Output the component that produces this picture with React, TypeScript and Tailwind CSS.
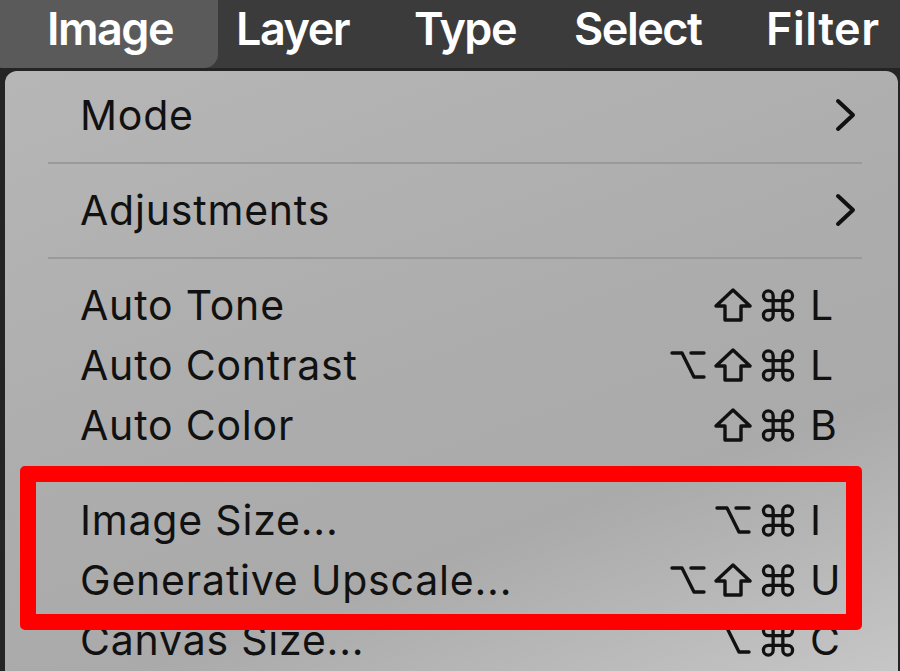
import React from "react";

type Mod = "opt" | "shift" | "cmd";
type Item = { label: string; mods?: Mod[]; key?: string; submenu?: boolean };

const groups: Item[][] = [
  [{ label: "Mode", submenu: true }],
  [{ label: "Adjustments", submenu: true }],
  [
    { label: "Auto Tone", mods: ["shift", "cmd"], key: "L" },
    { label: "Auto Contrast", mods: ["opt", "shift", "cmd"], key: "L" },
    { label: "Auto Color", mods: ["shift", "cmd"], key: "B" },
  ],
  [
    { label: "Image Size...", mods: ["opt", "cmd"], key: "I" },
    { label: "Generative Upscale...", mods: ["opt", "shift", "cmd"], key: "U" },
    { label: "Canvas Size...", mods: ["opt", "cmd"], key: "C" },
  ],
];

const sans = "font-['Inter','Liberation_Sans',sans-serif]";

function Chevron() {
  return (
    <svg width="24" height="34" viewBox="0 0 24 34" className="text-[#111]">
      <polyline
        points="4,3 19,17 4,31"
        fill="none"
        stroke="currentColor"
        strokeWidth="4"
        strokeLinecap="round"
        strokeLinejoin="round"
      />
    </svg>
  );
}

// keyboard modifier symbols ⌥ ⇧ ⌘
function ModIcon({ kind }: { kind: Mod }) {
  const common = {
    fill: "none",
    stroke: "#111",
    strokeWidth: 3.4,
    strokeLinecap: "round" as const,
    strokeLinejoin: "round" as const,
  };
  if (kind === "cmd") {
    return (
      <svg width="34" height="33" viewBox="0 0 34 34" aria-label="⌘">
        <path
          {...common}
          d="M12 12H22V22H12Z M12 12V7A5 5 0 1 0 7 12H12 M22 12V7A5 5 0 1 1 27 12H22 M12 22V27A5 5 0 1 1 7 22H12 M22 22V27A5 5 0 1 0 27 22H22"
        />
      </svg>
    );
  }
  if (kind === "shift") {
    return (
      <svg width="38" height="34" viewBox="0 0 38 34" aria-label="⇧">
        <path {...common} d="M19 2L36 18H27V32H11V18H2Z" />
      </svg>
    );
  }
  return (
    <svg width="36" height="30" viewBox="0 0 36 30" aria-label="⌥">
      <path {...common} d="M2 3H12L24 27H34 M21 3H34" />
    </svg>
  );
}

function Row({ item }: { item: Item }) {
  return (
    <div className="flex h-[60px] items-center">
      <span className="flex-1 pl-[75px] text-[41px] leading-none tracking-[0.8px] text-[#111]">
        {item.label}
      </span>
      {item.submenu ? (
        <div className="mr-[40px] flex w-[24px] justify-end">
          <Chevron />
        </div>
      ) : (
        <div className="mr-[16px] flex items-center">
          <span className="flex justify-end">
            {item.mods!.map((m, i) => (
              <span key={i} className="flex w-[45px] items-center justify-center">
                <ModIcon kind={m} />
              </span>
            ))}
          </span>
          <span className="ml-[10px] w-[72px] text-[41px] leading-none text-[#111]">
            {item.key}
          </span>
        </div>
      )}
    </div>
  );
}

export default function App() {
  return (
    <div className={`relative h-[671px] w-[900px] overflow-hidden bg-[#242424] ${sans}`}>
      <div className="flex h-[68px] items-center bg-[#3b3b3b] pb-[12px] text-[45px] font-semibold leading-none tracking-[-1.5px] text-white">
        <div className="-mb-[12px] -ml-[10px] flex h-[68px] w-[228px] items-center self-start rounded-b-[14px] bg-[#5a5a5a] pb-[12px] pl-[57px]">
          Image
        </div>
        <div className="ml-[18px] w-[178px]">Layer</div>
        <div className="w-[160px]">Type</div>
        <div className="w-[192px]">Select</div>
        <div className="tracking-[0.5px]">Filter</div>
      </div>

      <div className="ml-[5px] mt-[3px] h-[600px] w-[893px] rounded-t-[12px] bg-[linear-gradient(160deg,#b6b6b6_0%,#adadad_45%,#aaaaaa_70%,#c6c6c6_100%)] pt-[14px]">
        {groups.map((g, gi) => (
          <div key={gi}>
            {gi > 0 && (
              <div className="flex h-[35px] items-center">
                <div className="ml-[43px] h-[2px] w-[814px] bg-[#9a9a9a]" />
              </div>
            )}
            {g.map((item) => (
              <Row key={item.label} item={item} />
            ))}
          </div>
        ))}
      </div>

      <div className="pointer-events-none absolute left-[20px] top-[466px] h-[164px] w-[842px] rounded-[5px] border-[16px] border-[#ff0000]" />
    </div>
  );
}
